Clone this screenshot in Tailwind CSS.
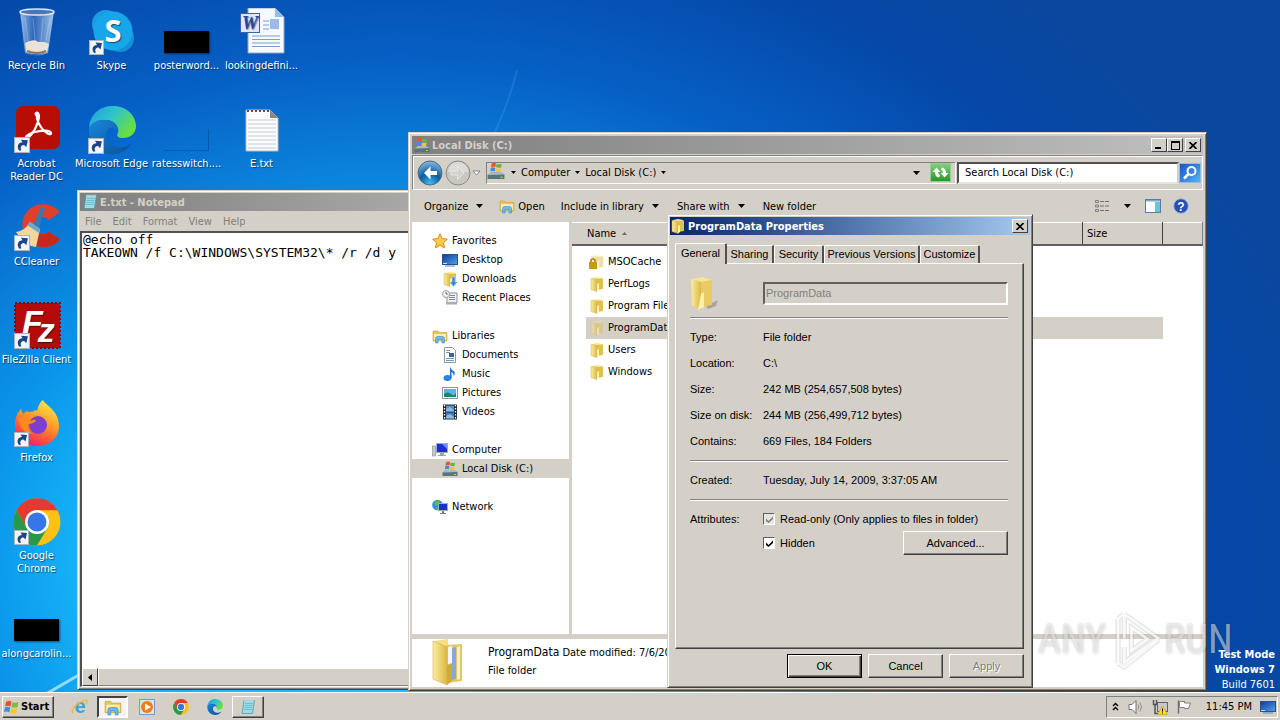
<!DOCTYPE html>
<html lang="en">
<head>
    <meta charset="UTF-8">
    <meta name="viewport" content="width=device-width, initial-scale=1.0">
    <title>Desktop</title>
    <script src="https://cdn.jsdelivr.net/npm/@tailwindcss/browser@4"></script>
</head>
<body class="h-screen overflow-hidden flex flex-col text-[11px] leading-[13px] text-black font-['DejaVu_Sans_Condensed','DejaVu_Sans',sans-serif]">

    <!-- Shared icons -->
    <svg class="absolute size-0" aria-hidden="true">
        <defs>
            <linearGradient id="g-folder" x1="0" x2="1"><stop offset="0" stop-color="#fbeea0"/><stop offset="1" stop-color="#dcb843"/></linearGradient>
            <linearGradient id="g-edge" x1="0" y1="0" x2="1" y2=".6"><stop offset="0" stop-color="#1e9be6"/><stop offset=".5" stop-color="#2fc5c8"/><stop offset="1" stop-color="#6be03a"/></linearGradient>
            <linearGradient id="g-edge2" x1="0" x2="1" y2="1"><stop offset="0" stop-color="#1a86da"/><stop offset="1" stop-color="#0c4f96"/></linearGradient>
            <linearGradient id="g-fox" x1=".8" y1="0" x2=".3" y2="1"><stop offset="0" stop-color="#fff04c"/><stop offset=".45" stop-color="#ff9a28"/><stop offset=".8" stop-color="#ff4545"/><stop offset="1" stop-color="#e3206e"/></linearGradient>
            <linearGradient id="g-bin" x1="0" x2="1"><stop offset="0" stop-color="#b4d4f2" stop-opacity=".85"/><stop offset=".4" stop-color="#3f72bd" stop-opacity=".7"/><stop offset="1" stop-color="#c6dcf3" stop-opacity=".85"/></linearGradient>
            <radialGradient id="g-back" cx=".5" cy=".95" r=".9"><stop offset="0" stop-color="#3cc4f0"/><stop offset=".5" stop-color="#0d5ba0"/><stop offset="1" stop-color="#7db2d8"/></radialGradient>
            <linearGradient id="g-screen" x1="0" x2="1" y2="1"><stop offset="0" stop-color="#10389c"/><stop offset="1" stop-color="#4fa3ea"/></linearGradient>
        </defs>
        <symbol id="i-shortcut" viewBox="0 0 15 15">
            <rect x=".5" y=".5" width="14" height="14" fill="#f4f6fa" stroke="#a9b4c4"/>
            <path d="M5 13C2 9 4 5 8 5L6.500 2.500L13 3L11.500 9.500L9.500 7.500C6.500 7.500 5.500 10 7 12.500Z" fill="#1c4587"/>
        </symbol>
        <symbol id="i-folder" viewBox="0 0 16 16">
            <path d="M3 2L8 1L13 2V12L8 14L3 13Z" fill="#f6e593"/>
            <path d="M8 3L14 2.500V13L8 14Z" fill="#e2c04d"/>
            <path d="M2 2.500L8 3.500V15.500L2 13.500Z" fill="url(#g-folder)" stroke="#cfae48" stroke-width=".5"/>
            <path d="M8 8L10 7V14L8 15.500Z" fill="#fff3b5"/>
        </symbol>
        <symbol id="i-flag" viewBox="0 0 16 16">
            <path d="M2 3Q5 1 7.500 2.500L6.500 7.500Q4 6 1 7.500Z" fill="#e8532a"/>
            <path d="M8.500 3Q11 4.500 14.500 3L13.500 8Q10.500 9 7.500 8Z" fill="#7fba3c"/>
            <path d="M1 8.500Q3.500 7 6.300 8.500L5.300 13.500Q3 12 0 13Z" fill="#3e8ee0"/>
            <path d="M7.300 9Q10 10.500 13.300 9L12.300 14Q9.500 15 6.300 14Z" fill="#f8c62d"/>
        </symbol>
        <symbol id="i-disk" viewBox="0 0 16 16">
            <path d="M4 1.500Q6 0 8 1L7.500 4.500Q5.500 3.500 3.500 4.500Z" fill="#e8532a"/><path d="M8.500 1.500Q10.500 2.500 13 1.500L12.500 5Q10 5.500 8 4.500Z" fill="#6cb33e"/>
            <path d="M3.300 5Q5.500 4 7.400 5.300L7 8.500Q5 7.500 3 8.500Z" fill="#3e8ee0"/><path d="M8 5.500Q10 6.500 12.500 5.500L12 9Q9.500 9.500 7.500 8.500Z" fill="#f8c62d"/>
            <path d="M2 10.500L4 9H12L15.500 11V15H.5V11.500Z" fill="#5d737b"/><path d="M4 9H12L15.500 11L.5 11.500Z" fill="#a9bcc2"/><path d="M12 13h2v1h-2z" fill="#6f6"/>
        </symbol>
        <symbol id="i-explorer" viewBox="0 0 16 16">
            <path d="M1 3H6L7 4.500H15V13H1Z" fill="#e6c65c" stroke="#c59f36" stroke-width=".6"/>
            <path d="M2 6H14V12H2Z" fill="#fbeeaa"/>
            <path d="M3.500 15V10.500Q3.500 8.500 6 8.500H10Q12.500 8.500 12.500 10.500V15H10V11.500H6V15Z" fill="#6cbce8" stroke="#3a8cc4" stroke-width=".6"/>
        </symbol>
        <symbol id="i-notepad" viewBox="0 0 16 16">
            <path d="M4 1.500H14.500L12.500 14.500H2Z" fill="#9adbe6" stroke="#4a8f9e" stroke-width=".7"/>
            <path d="M5 4.500H13M4.600 6.500H12.600M4.300 8.500H12.300M4 10.500H12" stroke="#5fb3c4" stroke-width=".7"/>
            <path d="M4.500 1.500H14" stroke="#e9f5f7" stroke-width="1.500" stroke-dasharray="1 1"/>
        </symbol>
        <symbol id="i-chrome" viewBox="0 0 48 48">
            <circle cx="24" cy="24" r="23.500" fill="#fbc116"/>
            <path d="M3.600 12.200A23.500 23.500 0 0 1 44.400 12.200H24L13.500 30Z" fill="#e33b2e"/>
            <path d="M3.600 12.200A23.500 23.500 0 0 0 24 47.500L34.400 30L24 35.800L13.800 30Z" fill="#269a48"/>
            <circle cx="24" cy="24" r="12" fill="#fff"/><circle cx="24" cy="24" r="9.500" fill="#3577e8"/>
        </symbol>
        <symbol id="i-edge" viewBox="0 0 48 48">
            <path d="M1 22C2 8 12 0 25 0C39 0 48 10 48 20C48 28 42 32 35 32C30 32 28 30 30 27C32 22 27 14 18 14C9 14 3 18 1 22Z" fill="url(#g-edge)"/>
            <path d="M1 22C4 16 11 13 18 14C26 14 31 21 30 26C27 20 19 20 18 28C17 37 26 43 36 41C40 40 43 38 44.500 36C40 44 33 48 24 48C10 48 0 37 1 22Z" fill="url(#g-edge2)"/>
        </symbol>
        <symbol id="i-monitor" viewBox="0 0 16 16">
            <rect x=".5" y="2.500" width="15" height="10" fill="url(#g-screen)" stroke="#27508f"/><path d="M3 14H13" stroke="#5b83b8"/>
            <path d="M1 11h4v1H1z" fill="#bfe4ff"/>
        </symbol>
        <symbol id="i-down" viewBox="0 0 7 4"><path d="M0 0H7L3.500 4Z" fill="#000"/></symbol>
        <symbol id="i-close" viewBox="0 0 8 7"><path d="M.5 0L7.500 7M7.500 0L.5 7" stroke="#000" stroke-width="1.600"/></symbol>
    </svg>

    <main class="relative flex-1 min-h-0 overflow-hidden bg-[radial-gradient(ellipse_62%_90%_at_31%_81%,#2ac8fa_0%,#16b2f6_40%,#0a94ea_53%,#0a80da_64%,#0660c6_80%,#0548a8_103%,#0a48a0_120%)]">
        <svg class="absolute inset-0 size-full" viewBox="0 0 1280 692" preserveAspectRatio="none" fill="none" aria-hidden="true">
            <path d="M46 694L160 628" stroke="#c9f4ff" stroke-width="3" opacity=".7"/>
            <path d="M495 132Q510 100 517 70" stroke="#6db4f2" stroke-width="2" opacity=".2"/>
        </svg>

        <!-- Desktop icons -->
        <div class="relative -ml-px w-[300px] grid grid-cols-4 grid-flow-row auto-rows-[98px] text-center text-white [text-shadow:1px_1px_1px_#0008]">
            <a href="#" class="col-start-1 row-start-1 flex flex-col items-center pt-2 gap-[3px]">
                <svg class="size-12" viewBox="0 0 48 48"><path d="M7 3L12 45Q24 50 35 45L41 3Z" fill="url(#g-bin)"/><ellipse cx="24" cy="4" rx="17" ry="3" fill="#4876b8" stroke="#dbe7f3" stroke-width="1.500"/><path d="M12 35Q22 30 25 34Q32 33 36 36L34 44Q23 48 13 44Z" fill="#e9e2d6"/><path d="M14 43Q24 47 33 43" stroke="#92705b" stroke-width="2" fill="none"/><path d="M12 9L16 38M20 10L22 33M30 10L28 33M37 10L33 32" stroke="#dbeaf8" stroke-opacity=".3" fill="none"/></svg>
                <span>Recycle Bin</span>
            </a>
            <a href="#" class="col-start-2 row-start-1 flex flex-col items-center pt-2 gap-[3px]">
                <svg class="size-12" viewBox="0 0 48 48"><circle cx="18" cy="16" r="14" fill="#1c9de2"/><circle cx="32" cy="30" r="14" fill="#1590d8"/><circle cx="25" cy="23" r="19.500" fill="#18a6ea"/><text x="25" y="34" text-anchor="middle" font-family="Open Sans" font-weight="700" font-size="31" fill="#fff">S</text><use href="#i-shortcut" x="1" y="32" width="15" height="15"/></svg>
                <span>Skype</span>
            </a>
            <a href="#" class="col-start-3 row-start-1 flex flex-col items-center pt-2 gap-[3px]">
                <span class="h-12 flex items-end pb-[3px]"><span class="w-[45px] h-[22px] bg-black shadow-[1px_1px_2px_#0008]"></span></span>
                <span>posterword...</span>
            </a>
            <a href="#" class="col-start-4 row-start-1 flex flex-col items-center pt-2 gap-[3px]">
                <svg class="size-12" viewBox="0 0 48 48"><path d="M10 0H37L46 9V45H10Z" fill="#f6f9ff" stroke="#8ea8d0"/><path d="M37 0V9H46Z" fill="#9bbbe8"/><path d="M14 28H42M14 31.500H42M14 35H42M14 38.500H42M25 13H31M25 17H31M25 21H31" stroke="#7d9bce"/><rect x="32" y="11" width="9" height="10" fill="#9cbaf0"/><rect x="2.500" y="5.500" width="19" height="19" fill="#dfe8fa" stroke="#3e60b0"/><text x="12" y="21" text-anchor="middle" font-family="Liberation Serif" font-style="italic" font-weight="700" font-size="18" fill="#234a9e">W</text></svg>
                <span>lookingdefini...</span>
            </a>
            <a href="#" class="col-start-1 row-start-2 flex flex-col items-center pt-2 gap-[3px]">
                <svg class="size-12" viewBox="0 0 48 48"><rect x="3" y="0" width="44" height="43" rx="7" fill="#b80d05"/><path d="M24 10C20 7 26 4 26 11C25 19 20 28 15 32C10 34 13 28 22 26C31 24 37 24 38 27C38 31 28 25 24 13Z" fill="none" stroke="#fff" stroke-width="2.200"/><use href="#i-shortcut" x="1" y="31" width="16" height="16"/></svg>
                <span>Acrobat<br>Reader DC</span>
            </a>
            <a href="#" class="col-start-2 row-start-2 flex flex-col items-center pt-2 gap-[3px] whitespace-nowrap">
                <svg class="size-12" viewBox="0 0 48 48"><use href="#i-edge" width="48" height="48"/><use href="#i-shortcut" x="0" y="32" width="16" height="16"/></svg>
                <span>Microsoft Edge</span>
            </a>
            <a href="#" class="col-start-3 row-start-2 flex flex-col items-center pt-2 gap-[3px]">
                <span class="h-12 flex items-end pb-[3px]"><span class="w-[45px] h-[22px] border-r border-b border-[#0658aa]"></span></span>
                <span>ratesswitch....</span>
            </a>
            <a href="#" class="col-start-4 row-start-2 flex flex-col items-center pt-2 gap-[3px]">
                <svg class="size-12" viewBox="0 0 48 48"><path d="M8 4H32L40 12V45H8Z" fill="#fbfbfb" stroke="#b8bcc4"/><path d="M32 4V12H40Z" fill="#7e8793"/><path d="M9 5H31" stroke="#555" stroke-dasharray="2 2" stroke-width="2"/><path d="M10 14H38M10 18H38M10 22H38M10 26H38M10 30H38M10 34H38M10 38H38M10 42H38" stroke="#c5cad4"/></svg>
                <span>E.txt</span>
            </a>
            <a href="#" class="col-start-1 row-start-3 flex flex-col items-center pt-2 gap-[3px]">
                <svg class="size-12" viewBox="0 0 48 48"><path d="M47 8C38-3 20-2 13 9C4 22 12 42 30 43C38 43 44 40 47 35L36 28C30 33 22 29 22 21C22 14 31 10 36 16Z" fill="#e0402b"/><path d="M47 35L36 28C30 33 22 29 22 24L14 32C18 40 24 43 30 43C38 43 44 40 47 35Z" fill="#c42a1c"/><path d="M28 3L32 4L26 24L20 21Z" fill="#3c78a8"/><path d="M17 18L27 25L23 43Q12 42 3 28Q12 27 17 18Z" fill="#f3d69c"/><path d="M17 18L27 25L26 29L14 21Z" fill="#6aa7cc"/><use href="#i-shortcut" x="1" y="31" width="16" height="16"/></svg>
                <span>CCleaner</span>
            </a>
            <a href="#" class="col-start-1 row-start-4 flex flex-col items-center pt-2 gap-[3px] whitespace-nowrap">
                <svg class="size-12" viewBox="0 0 48 48"><rect x="2" y="1" width="45" height="45" fill="#b50a0a" stroke="#8a0000" stroke-width="2" stroke-dasharray="2 2"/><text x="9" y="32" font-family="Liberation Sans" font-weight="700" font-style="italic" font-size="34" fill="#fff">F<tspan dx="-5" dy="8">z</tspan></text><use href="#i-shortcut" x="1" y="31" width="16" height="16"/></svg>
                <span>FileZilla Client</span>
            </a>
            <a href="#" class="col-start-1 row-start-5 flex flex-col items-center pt-2 gap-[3px]">
                <svg class="size-12" viewBox="0 0 48 48"><path d="M30 0C32 5 46 10 46 26C46 38 37 46 24 46C11 46 2 37 2 25C2 17 5 12 8 9L10 14C12 12 14 10 16 12C22 12 22 9 24 11C25 6 27 2 30 0Z" fill="url(#g-fox)"/><circle cx="25" cy="25" r="9" fill="#7a3fd0"/><path d="M5 18Q13 17 18 21Q22 18 23 21Q20 24 15 24Q15 30 20 34Q8 34 5 18Z" fill="#ff8a1e"/><use href="#i-shortcut" x="1" y="32" width="15" height="15"/></svg>
                <span>Firefox</span>
            </a>
            <a href="#" class="col-start-1 row-start-6 flex flex-col items-center pt-2 gap-[3px]">
                <svg class="size-12" viewBox="0 0 48 48"><use href="#i-chrome" width="48" height="48"/><use href="#i-shortcut" x="1" y="32" width="15" height="15"/></svg>
                <span>Google<br>Chrome</span>
            </a>
            <a href="#" class="col-start-1 row-start-7 flex flex-col items-center pt-2 gap-[3px]">
                <span class="h-12 flex items-end pb-[3px]"><span class="w-[45px] h-[22px] bg-black shadow-[1px_1px_2px_#0008]"></span></span>
                <span>alongcarolin...</span>
            </a>
        </div>

        <p class="absolute right-[5px] bottom-0 text-right text-white leading-[15px] whitespace-nowrap"><b>Test Mode<br>Windows 7</b><br>Build 7601</p>

        <!-- Notepad -->
        <section class="absolute left-[77px] top-[190px] bottom-[2px] w-[400px] flex flex-col bg-[#d4d0c8] border border-t-[#d4d0c8] border-l-[#d4d0c8] border-r-[#404040] border-b-[#404040] p-[2px] shadow-[inset_1px_1px_0_#fff,inset_-1px_-1px_0_#808080]">
            <header class="h-[18px] shrink-0 flex items-center gap-[2px] px-[2px] bg-linear-to-r from-[#808080] to-[#b0b0b0] text-[#d4d0c8] font-bold">
                <svg class="size-4"><use href="#i-notepad"/></svg>
                <h2>E.txt - Notepad</h2>
            </header>
            <nav class="h-5 shrink-0 flex items-center gap-[11px] px-[5px] text-[#808080]">
                <button>File</button><button>Edit</button><button>Format</button><button>View</button><button>Help</button>
            </nav>
            <textarea aria-label="Text" class="flex-1 resize-none outline-none overflow-hidden bg-white border-t-2 border-l-2 border-[#505050] pl-px text-[13px] leading-[13px] font-['DejaVu_Sans_Mono',monospace]" spellcheck="false">@echo off
TAKEOWN /f C:\WINDOWS\SYSTEM32\* /r /d y</textarea>
            <div class="h-[19px] shrink-0 flex border-l-2 border-l-[#505050] border-b border-b-white bg-[#d4d0c8]">
                <button aria-label="Scroll left" class="w-4 grid place-items-center border border-t-white border-l-white border-r-[#404040] border-b-[#404040]"><svg class="w-1 h-[7px]" viewBox="0 0 4 7"><path d="M4 0V7L0 3.500Z"/></svg></button>
                <div class="flex-1 border border-white border-b-[#808080]"></div>
            </div>
        </section>

        <!-- Explorer -->
        <section class="absolute left-[408px] top-[132px] bottom-px w-[799px] flex flex-col bg-[#d4d0c8] border border-t-[#d4d0c8] border-l-[#d4d0c8] border-r-[#404040] border-b-[#404040] p-[3px] shadow-[inset_1px_1px_0_#fff,inset_-1px_-1px_0_#808080]">
            <header class="h-[18px] shrink-0 flex items-center gap-[2px] px-[2px] bg-linear-to-r from-[#808080] to-[#c0c0c0] text-[#d4d0c8] font-bold">
                <svg class="size-4"><use href="#i-disk"/></svg>
                <h2 class="flex-1">Local Disk (C:)</h2>
                <div class="flex">
                    <button aria-label="Minimize" class="w-4 h-[14px] flex items-end p-[2px] bg-[#d4d0c8] border border-t-white border-l-white border-r-[#404040] border-b-[#404040]"><span class="w-[6px] h-[2px] bg-black ml-px"></span></button>
                    <button aria-label="Maximize" class="w-4 h-[14px] grid place-items-center bg-[#d4d0c8] border border-t-white border-l-white border-r-[#404040] border-b-[#404040]"><span class="w-[9px] h-[9px] border border-t-2 border-black"></span></button>
                    <button aria-label="Close" class="ml-[2px] w-4 h-[14px] grid place-items-center bg-[#d4d0c8] border border-t-white border-l-white border-r-[#404040] border-b-[#404040]"><svg class="w-2 h-[7px]"><use href="#i-close"/></svg></button>
                </div>
            </header>

            <div class="h-[35px] shrink-0 mt-px flex items-center border border-[#808080] border-b-white border-r-white shadow-[inset_1px_1px_0_#fff] pl-1 pr-px">
                <button aria-label="Back" class="size-[26px]"><svg class="size-full" viewBox="0 0 26 26"><circle cx="13" cy="13" r="12" fill="url(#g-back)" stroke="#4d6c86"/><path d="M13.500 6.500L7 13L13.500 19.500V15H20V11H13.500Z" fill="#fff"/></svg></button>
                <button aria-label="Forward" class="ml-[2px] size-[26px]" disabled><svg class="size-full" viewBox="0 0 26 26"><circle cx="13" cy="13" r="12" fill="#c9c7c2" stroke="#8a8a88"/><path d="M3 12A10 10 0 0 1 23 12Z" fill="#dedcd8"/><path d="M12.500 6.500L19 13L12.500 19.500V15H6V11H12.500Z" fill="#d4d2ce" stroke="#eee" stroke-width=".8"/></svg></button>
                <button aria-label="Recent" class="mx-px"><svg class="w-[9px] h-[6px]" viewBox="0 0 9 6"><path d="M1 1H8L4.500 5Z" fill="#fff" stroke="#707070" stroke-width=".8"/></svg></button>
                <div class="h-[22px] ml-1 flex-1 flex items-center border border-[#808080] border-r-white border-b-white">
                    <svg class="size-[18px] mb-1"><use href="#i-disk"/></svg>
                    <svg class="w-[5px] h-[3px] ml-[6px]"><use href="#i-down"/></svg>
                    <button class="ml-[5px]">Computer</button>
                    <svg class="w-[5px] h-[3px] ml-[5px]"><use href="#i-down"/></svg>
                    <button class="ml-[5px] whitespace-nowrap">Local Disk (C:)</button>
                    <svg class="w-[5px] h-[3px] ml-[5px]"><use href="#i-down"/></svg>
                    <span class="flex-1"></span>
                    <button aria-label="Previous locations" class="mr-[10px]"><svg class="w-[7px] h-1"><use href="#i-down"/></svg></button>
                    <button aria-label="Refresh" class="w-[21px] h-[19px] bg-linear-to-b from-[#7fd07a] to-[#1d9c26] border border-[#9fc69c]"><svg class="size-full" viewBox="0 0 19 17"><path d="M8 13.500Q4 13 4 8H1.500L5.500 3.500L9.500 8H7Q7 10.500 9 11.500ZM11 3.500Q15 4 15 9H17.500L13.500 13.500L9.500 9H12Q12 6.500 10 5.500Z" fill="#fff"/></svg></button>
                    <span class="w-1"></span>
                </div>
                <input type="text" aria-label="Search" value="Search Local Disk (C:)" class="w-[222px] h-[22px] ml-px px-[6px] bg-white outline-none border-2 border-t-[#505050] border-l-[#505050] border-r-[#d4d0c8] border-b-[#e8e6e0]">
                <button aria-label="Search" class="w-[22px] h-5 bg-linear-to-br from-[#1f51c4] to-[#55b6f2] border border-[#9ab8dc]"><svg class="size-full" viewBox="0 0 20 18"><circle cx="11.500" cy="7" r="4" fill="#3d7fdc" stroke="#fff" stroke-width="2"/><path d="M8.500 10L4 14.500" stroke="#fff" stroke-width="2.500"/></svg></button>
            </div>

            <nav class="h-8 shrink-0 flex items-center pl-3 pr-[14px] whitespace-nowrap">
                <button class="flex items-center gap-2">Organize <svg class="w-[7px] h-1"><use href="#i-down"/></svg></button>
                <button class="flex items-center gap-[3px] ml-4"><svg class="size-4"><use href="#i-explorer"/></svg>Open</button>
                <button class="flex items-center gap-2 ml-4">Include in library <svg class="w-[7px] h-1"><use href="#i-down"/></svg></button>
                <button class="flex items-center gap-2 ml-[18px]">Share with <svg class="w-[7px] h-1"><use href="#i-down"/></svg></button>
                <button class="ml-[18px]">New folder</button>
                <span class="flex-1"></span>
                <button aria-label="Change view" class="flex items-center gap-[14px]"><svg class="size-4" viewBox="0 0 16 16" fill="none"><path d="M1.500 2.500h3v2h-3zM1.500 7h3v2h-3zM1.500 11.500h3v2h-3z" stroke="#808080"/><path d="M6 3.500H15M6 8H15M6 12.500H15" stroke="#707070" stroke-dasharray="4 1"/></svg><svg class="w-[7px] h-1"><use href="#i-down"/></svg></button>
                <button aria-label="Preview pane" class="ml-[14px]"><svg class="size-4" viewBox="0 0 16 16"><rect x=".5" y="1.500" width="15" height="13" fill="#fff" stroke="#5b7d9c"/><path d="M1 2H15V3.500H1Z" fill="#7fa8cc"/><rect x="10" y="4" width="5" height="10" fill="#66c4dc"/></svg></button>
                <button aria-label="Help" class="ml-3"><svg class="size-4" viewBox="0 0 16 16"><circle cx="8" cy="8" r="7.300" fill="#2750b4" stroke="#9fb4dc"/><text x="8" y="12.500" text-anchor="middle" font-family="Liberation Sans" font-weight="700" font-size="12" fill="#fff">?</text></svg></button>
            </nav>

            <div class="flex-1 min-h-0 flex gap-[3px]">
                <aside class="w-[157px] shrink-0 bg-white pt-[9px] *:h-[19px] *:flex *:items-center *:gap-1 *:pl-5">
                    <a href="#"><svg class="size-4" viewBox="0 0 16 16"><path d="M8 .8L10.200 5.600L15.400 6.200L11.500 9.700L12.600 14.900L8 12.300L3.400 14.900L4.500 9.700L.6 6.200L5.800 5.600Z" fill="#ffc94a" stroke="#e58a1c"/></svg>Favorites</a>
                    <a href="#"><svg class="size-4 ml-[10px]"><use href="#i-monitor"/></svg>Desktop</a>
                    <a href="#"><svg class="size-4 ml-[10px]" viewBox="0 0 16 16"><use href="#i-folder" width="16" height="16"/><path d="M10 6H13V11H15.500L11.500 15.500L7.500 11H10Z" fill="#2f8ce4" stroke="#cde4fa" stroke-width=".5"/></svg>Downloads</a>
                    <a href="#"><svg class="size-4 ml-[10px]" viewBox="0 0 16 16"><path d="M5 3H15V13H5Z" fill="#eef1f4" stroke="#8a93a0"/><path d="M7 5.500H13M7 7.500H13M7 9.500H13" stroke="#6b8fc0"/><path d="M4 12H15V14.500H4Z" fill="#a8adb6"/><circle cx="4" cy="4" r="3.500" fill="#f4f4f4" stroke="#98a0aa"/><path d="M4 2V4H6" stroke="#555" fill="none" stroke-width=".8"/></svg>Recent Places</a>
                    <span></span>
                    <a href="#"><svg class="size-4"><use href="#i-explorer"/></svg>Libraries</a>
                    <a href="#"><svg class="size-4 ml-[10px]" viewBox="0 0 16 16"><path d="M2.500 .5H10.500L13.500 3.500V15.500H2.500Z" fill="#fff" stroke="#8b98aa"/><path d="M4 3.500H8M4 5.500H8M4 11.500H12M4 13.500H12" stroke="#8294b0"/><rect x="7" y="6" width="5" height="4" fill="#2f62b8"/></svg>Documents</a>
                    <a href="#"><svg class="size-4 ml-[10px]" viewBox="0 0 16 16"><ellipse cx="5.500" cy="12" rx="4" ry="3" fill="#2786e0"/><path d="M8 12V1Q9 4 12.500 5.500Q13.500 8 11.500 10.500Q12 7 9.500 6V12Z" fill="#1c6fd0"/></svg>Music</a>
                    <a href="#"><svg class="size-4 ml-[10px]" viewBox="0 0 16 16"><rect x=".5" y="2.500" width="15" height="11" fill="#fff" stroke="#8496a8"/><rect x="2" y="4" width="12" height="8" fill="#58b4e4"/><path d="M2 9Q6 6 9 9T14 8V12H2Z" fill="#2c7a6e"/></svg>Pictures</a>
                    <a href="#"><svg class="size-4 ml-[10px]" viewBox="0 0 16 16"><rect x="1" y=".5" width="14" height="15" fill="#20242c"/><path d="M2.500 1V15M13.500 1V15" stroke="#fff" stroke-width="1.300" stroke-dasharray="1.500 1.500"/><rect x="4" y="1.500" width="8" height="6" fill="#4f8fd0"/><rect x="4" y="8.500" width="8" height="6" fill="#3d7ec4"/><path d="M4 5L8 3L12 6V7.500H4ZM4 12L8 10L12 13V14.500H4Z" fill="#8abadf"/></svg>Videos</a>
                    <span></span>
                    <a href="#"><svg class="size-4" viewBox="0 0 16 16"><rect x=".5" y="4" width="3" height="10" fill="#c4cad2" stroke="#808890" stroke-width=".6"/><rect x="4.500" y="1.500" width="11" height="9" fill="#1c2fd0" stroke="#a4acb8"/><path d="M10 2H15V7Z" fill="#6a8cf4"/><path d="M8 11H12V13H14V14H6V13H8Z" fill="#9aa2ae"/></svg>Computer</a>
                    <a href="#" class="bg-[#d4d0c8]"><svg class="size-4 ml-[10px]"><use href="#i-disk"/></svg>Local Disk (C:)</a>
                    <span></span>
                    <a href="#"><svg class="size-4" viewBox="0 0 16 16"><circle cx="5.500" cy="6" r="5.300" fill="#2b8ede"/><path d="M2 3Q5 0 8 2L6 6L3 7ZM3 9L6 8V11Z" fill="#58b858"/><rect x="6.500" y="4.500" width="9" height="7" fill="#1c2fd0" stroke="#a4acb8"/><path d="M10 12H12V14H14V15H8V14H10Z" fill="#707a88"/></svg>Network</a>
                </aside>
                <div class="flex-1 min-w-0 bg-white">
                    <table class="w-full table-fixed border-collapse text-left">
                        <colgroup><col class="w-[14px]"><col><col class="w-20"><col class="w-10"></colgroup>
                        <thead class="bg-[#d4d0c8]">
                            <tr class="h-[22px] *:font-normal *:border-b-2 *:border-b-[#606060] *:border-t *:border-t-white">
                                <th colspan="2" class="border-r border-r-[#404040] pl-[15px]"><span class="flex items-center gap-[6px]">Name <svg class="w-[5px] h-[3px] rotate-180 opacity-50"><use href="#i-down"/></svg></span></th>
                                <th class="border-r border-r-[#404040] pl-1">Size</th>
                                <th class="border-r border-r-[#808080]"></th>
                            </tr>
                        </thead>
                        <tbody>
                            <tr class="h-[6px]"><td colspan="4"></td></tr>
                            <tr class="h-[22px]"><td></td><td><span class="flex items-center gap-[3px] pl-[3px]"><svg class="size-4" viewBox="0 0 16 16"><use href="#i-folder" width="16" height="16" opacity=".5"/><rect x="0" y="8" width="8" height="7" fill="#c59818"/><path d="M2 8V6Q4 3.500 6 6V8" stroke="#a47c10" stroke-width="1.500" fill="none"/></svg>MSOCache</span></td><td></td><td></td></tr>
                            <tr class="h-[22px]"><td></td><td><span class="flex items-center gap-[3px] pl-[3px]"><svg class="size-4"><use href="#i-folder"/></svg>PerfLogs</span></td><td></td><td></td></tr>
                            <tr class="h-[22px]"><td></td><td><span class="flex items-center gap-[3px] pl-[3px]"><svg class="size-4"><use href="#i-folder"/></svg>Program Files</span></td><td></td><td></td></tr>
                            <tr class="h-[22px]"><td></td><td class="bg-[#d4d0c8]"><span class="flex items-center gap-[3px] pl-[3px]"><svg class="size-4 opacity-50"><use href="#i-folder"/></svg>ProgramData</span></td><td class="bg-[#d4d0c8]"></td><td></td></tr>
                            <tr class="h-[22px]"><td></td><td><span class="flex items-center gap-[3px] pl-[3px]"><svg class="size-4"><use href="#i-folder"/></svg>Users</span></td><td></td><td></td></tr>
                            <tr class="h-[22px]"><td></td><td><span class="flex items-center gap-[3px] pl-[3px]"><svg class="size-4"><use href="#i-folder"/></svg>Windows</span></td><td></td><td></td></tr>
                        </tbody>
                    </table>
                </div>
            </div>

            <footer class="h-12 shrink-0 mt-[5px] flex items-center bg-white">
                <svg class="size-12 ml-3" viewBox="0 0 48 48"><path d="M10 2L24 0V42L12 40Z" fill="#f3df86"/><path d="M22 6L38 5V42L24 44Z" fill="#e3c765"/><path d="M24 8L28 7V40L24 42Z" fill="#f4f6fa"/><path d="M28 9L32 8V40L28 41Z" fill="#88a8dc"/><path d="M33 8L36 7V40L33 41Z" fill="#f7f0c8"/><path d="M9 2L23 8V46L9 40Z" fill="url(#g-folder)" stroke="#d3b04c" stroke-width=".6"/><path d="M23 26L28 24V42L23 46Z" fill="#d0a83c"/></svg>
                <div class="ml-4 pb-[2px] whitespace-nowrap">
                    <p class="leading-[18px]"><span class="text-xs">ProgramData</span> Date modified: 7/6/2023</p>
                    <p class="leading-[18px]">File folder</p>
                </div>
            </footer>
        </section>

        <!-- Properties dialog -->
        <section role="dialog" aria-labelledby="dlg-title" class="absolute left-[667px] top-[214px] w-[366px] h-[474px] flex flex-col bg-[#d4d0c8] border border-t-[#d4d0c8] border-l-[#d4d0c8] border-r-[#404040] border-b-[#404040] p-[2px] shadow-[inset_1px_1px_0_#fff,inset_-1px_-1px_0_#808080] font-['Liberation_Sans',Arial,sans-serif]">
            <header class="h-[18px] shrink-0 flex items-center gap-[2px] pr-[2px] bg-linear-to-r from-[#0a246a] to-[#a6caf0] text-white font-bold font-['DejaVu_Sans_Condensed','DejaVu_Sans',sans-serif]">
                <svg class="size-4"><use href="#i-folder"/></svg>
                <h2 id="dlg-title" class="flex-1">ProgramData Properties</h2>
                <button aria-label="Close" class="w-4 h-[14px] grid place-items-center bg-[#d4d0c8] border border-t-white border-l-white border-r-[#404040] border-b-[#404040]"><svg class="w-2 h-[7px]"><use href="#i-close"/></svg></button>
            </header>
            <div role="tablist" class="mt-2 ml-[5px] h-5 shrink-0 flex items-end whitespace-nowrap">
                <button role="tab" aria-selected="true" class="relative z-10 -mb-px w-[52px] h-[21px] pb-px rounded-t-xs bg-[#d4d0c8] border-t border-l border-white border-r-2 border-r-[#505050]">General</button>
                <button role="tab" class="w-[47px] h-[18px] border-t border-white border-r-2 border-r-[#505050]">Sharing</button>
                <button role="tab" class="w-[50px] h-[18px] rounded-t-xs border-t border-l border-white border-r-2 border-r-[#505050]">Security</button>
                <button role="tab" class="w-24 h-[18px] rounded-t-xs border-t border-l border-white border-r-2 border-r-[#505050]">Previous Versions</button>
                <button role="tab" class="w-[60px] h-[18px] rounded-t-xs border-t border-l border-white border-r-2 border-r-[#505050]">Customize</button>
            </div>
            <div role="tabpanel" class="flex-1 ml-[5px] mr-[6px] pl-[14px] pr-[15px] border border-t-white border-l-white border-r-[#404040] border-b-[#404040] shadow-[inset_-1px_-1px_0_#808080]">
                <div class="h-[54px] flex items-center border-b border-[#808080] shadow-[0_1px_0_#fff] pt-[6px]">
                    <svg class="w-8 h-9 mr-[41px]" viewBox="0 0 32 36"><path d="M16 30L28 24L26 30L18 33Z" fill="#aaa59c"/><path d="M3 3L12 1L22 4V28L10 31L3 28Z" fill="#f6e593"/><path d="M11 6L22 4V29L11 31Z" fill="#e8cb62"/><path d="M1 3L11 6V34L2 29Z" fill="url(#g-folder)"/><path d="M11 18L14 16V31L8 34Z" fill="#fdf0ac"/></svg>
                    <input type="text" aria-label="Folder name" value="ProgramData" disabled class="flex-1 min-w-0 h-[23px] pb-[2px] px-px text-[#808080] border-2 border-t-[#606060] border-l-[#606060] border-r-white border-b-white">
                </div>
                <dl class="grid grid-cols-[73px_1fr] auto-rows-[26px] items-center pt-[6px] pb-[6px] border-b border-[#808080] shadow-[0_1px_0_#fff] whitespace-nowrap">
                    <dt>Type:</dt><dd>File folder</dd>
                    <dt>Location:</dt><dd>C:\</dd>
                    <dt>Size:</dt><dd>242 MB (254,657,508 bytes)</dd>
                    <dt>Size on disk:</dt><dd>244 MB (256,499,712 bytes)</dd>
                    <dt>Contains:</dt><dd>669 Files, 184 Folders</dd>
                </dl>
                <dl class="h-[39px] grid grid-cols-[73px_1fr] items-center border-b border-[#808080] shadow-[0_1px_0_#fff] whitespace-nowrap">
                    <dt>Created:</dt><dd>Tuesday, July 14, 2009, 3:37:05 AM</dd>
                </dl>
                <div class="grid grid-cols-[73px_1fr] pt-[11px]">
                    <p class="pt-[2px]">Attributes:</p>
                    <div>
                        <div class="flex items-center gap-[5px] h-4">
                            <span class="grid place-items-center *:col-start-1 *:row-start-1"><input id="readonly" type="checkbox" checked class="appearance-none size-3 border border-t-[#606060] border-l-[#606060] border-r-white border-b-white bg-[#e8e6e0]"><svg class="size-[7px] pointer-events-none" viewBox="0 0 7 7"><path d="M0 2.500L2.500 5L7 .5V3L2.500 7L0 5Z" fill="#808080"/></svg></span>
                            <label for="readonly">Read-only (Only applies to files in folder)</label>
                        </div>
                        <div class="flex items-center gap-[5px] h-8">
                            <span class="grid place-items-center *:col-start-1 *:row-start-1"><input id="hidden" type="checkbox" checked class="appearance-none size-3 border border-t-[#606060] border-l-[#606060] border-r-white border-b-white bg-white"><svg class="size-[7px] pointer-events-none" viewBox="0 0 7 7"><path d="M0 2.500L2.500 5L7 .5V3L2.500 7L0 5Z"/></svg></span>
                            <label for="hidden" class="flex-1">Hidden</label>
                            <button class="w-[105px] h-6 border border-t-white border-l-white border-r-[#404040] border-b-[#404040] shadow-[inset_-1px_-1px_0_#808080]">Advanced...</button>
                        </div>
                    </div>
                </div>
            </div>
            <div class="flex justify-end gap-[6px] pt-[5px] pb-[7px] px-[6px]">
                <button class="w-[75px] h-6 border border-black shadow-[inset_1px_1px_0_#fff,inset_-1px_-1px_0_#404040,inset_-2px_-2px_0_#808080]">OK</button>
                <button class="w-[75px] h-6 border border-t-white border-l-white border-r-[#404040] border-b-[#404040] shadow-[inset_-1px_-1px_0_#808080]">Cancel</button>
                <button disabled class="w-[75px] h-6 text-[#808080] [text-shadow:1px_1px_0_#fff] border border-t-white border-l-white border-r-[#404040] border-b-[#404040] shadow-[inset_-1px_-1px_0_#808080]">Apply</button>
            </div>
        </section>

        <!-- Watermark -->
        <div class="absolute left-[1038px] top-[608px] h-16 flex items-center gap-1 pointer-events-none text-[40px] leading-none text-white/50 [text-shadow:0_0_3px_#0004] font-['Liberation_Sans_Narrow','Roboto_Condensed',sans-serif]">
            <span>ANY</span>
            <svg class="w-[50px] h-16" viewBox="0 0 56 64" fill="none"><path d="M9 8V58M16 3L54 30L16 57V40M16 3V30M9 8L16 3M9 58L16 62L54 32M24 18L42 31L24 44Z" stroke="#808080" stroke-opacity=".2" stroke-width="6"/><path d="M9 8V58M16 3L54 30L16 57V40M16 3V30M9 8L16 3M9 58L16 62L54 32M24 18L42 31L24 44Z" stroke="#fff" stroke-opacity=".75" stroke-width="3"/></svg>
            <span>RUN</span>
        </div>
    </main>

    <!-- Taskbar -->
    <footer class="h-7 shrink-0 flex items-center bg-[#d4d0c8] border-t border-white px-[2px]">
        <button class="h-[22px] w-[52px] flex items-center gap-px pl-px font-bold border border-t-white border-l-white border-r-[#404040] border-b-[#404040] shadow-[inset_-1px_-1px_0_#808080]"><svg class="size-4 shrink-0"><use href="#i-flag"/></svg>Start</button>
        <div class="flex items-center ml-[9px]">
            <button aria-label="Internet Explorer" class="w-[34px] h-[22px] grid place-items-center"><svg class="size-4 overflow-visible" viewBox="0 0 16 16"><text x="8" y="14" text-anchor="middle" font-family="Liberation Sans" font-weight="700" font-size="20" fill="#39a4e4">e</text><path d="M1 14.500Q-2 12 5 5.500Q14-1 15 2Q15.500 3 14 5" stroke="#f0b93a" stroke-width="1.500" fill="none"/></svg></button>
            <button aria-label="Explorer" class="w-[31px] h-[22px] grid place-items-center bg-[#f4f3f0] border-2 border-t-[#404040] border-l-[#404040] border-r-white border-b-white"><svg class="size-[18px]"><use href="#i-explorer"/></svg></button>
            <button aria-label="Media Player" class="ml-[2px] w-[34px] h-[22px] grid place-items-center"><svg class="size-4" viewBox="0 0 16 16"><rect x=".5" y=".5" width="15" height="15" fill="#d4e5f6" stroke="#6f9fd0"/><circle cx="8" cy="8" r="6" fill="#f07c14"/><path d="M6 4.500L12 8L6 11.500Z" fill="#fff"/></svg></button>
            <button aria-label="Chrome" class="w-[34px] h-[22px] grid place-items-center"><svg class="size-4"><use href="#i-chrome"/></svg></button>
            <button aria-label="Edge" class="w-[34px] h-[22px] grid place-items-center"><svg class="size-4"><use href="#i-edge"/></svg></button>
            <button aria-label="Notepad" class="w-8 h-[22px] grid place-items-center border border-t-white border-l-white border-r-[#404040] border-b-[#404040] shadow-[inset_-1px_-1px_0_#808080]"><svg class="size-4"><use href="#i-notepad"/></svg></button>
        </div>
        <div class="ml-auto h-[22px] w-[172px] flex items-center justify-between pl-1 pr-px border border-t-[#808080] border-l-[#808080] border-r-white border-b-white whitespace-nowrap">
            <button aria-label="Show hidden icons" class="px-px"><svg class="w-[7px] h-[9px]" viewBox="0 0 7 9" fill="none"><path d="M1 4L3.500 1.500L6 4M1 8L3.500 5.500L6 8" stroke="#000" stroke-width="1.400"/></svg></button>
            <svg class="size-4" viewBox="0 0 16 16" fill="none"><path d="M1 5.500H4L8 1.500V14.500L4 10.500H1Z" fill="#fff" stroke="#707070"/><path d="M10 5.500Q12 8 10 10.500M12 3.500Q15 8 12 12.500" stroke="#909090"/></svg>
            <svg class="size-4" viewBox="0 0 16 16" fill="none"><rect x="5.500" y="3.500" width="10" height="9" fill="#c5c8cc" stroke="#606468"/><path d="M1.500 1V5.500H4.500V1M3 5.500V14.500H8" stroke="#505458" stroke-width="1.500"/><path d="M10.500 7L15.500 15.500H5.500Z" fill="#ffd928" stroke="#c79a10" stroke-width=".6"/><path d="M10.500 9.500V12.500M10.500 13.500V14.500" stroke="#000"/></svg>
            <svg class="size-4" viewBox="0 0 16 16"><path d="M2.500 1.500V14.500" stroke="#707070" stroke-width="1.500"/><path d="M3.500 2.500H8.500V4H14.500L12.500 9.500H8.500V8.500H3.500Z" fill="#fff" stroke="#808080"/></svg>
            <time class="pl-[6px]">11:45 PM</time>
            <button aria-label="Show desktop"><svg class="size-4"><use href="#i-monitor"/></svg></button>
        </div>
    </footer>
</body>
</html>
